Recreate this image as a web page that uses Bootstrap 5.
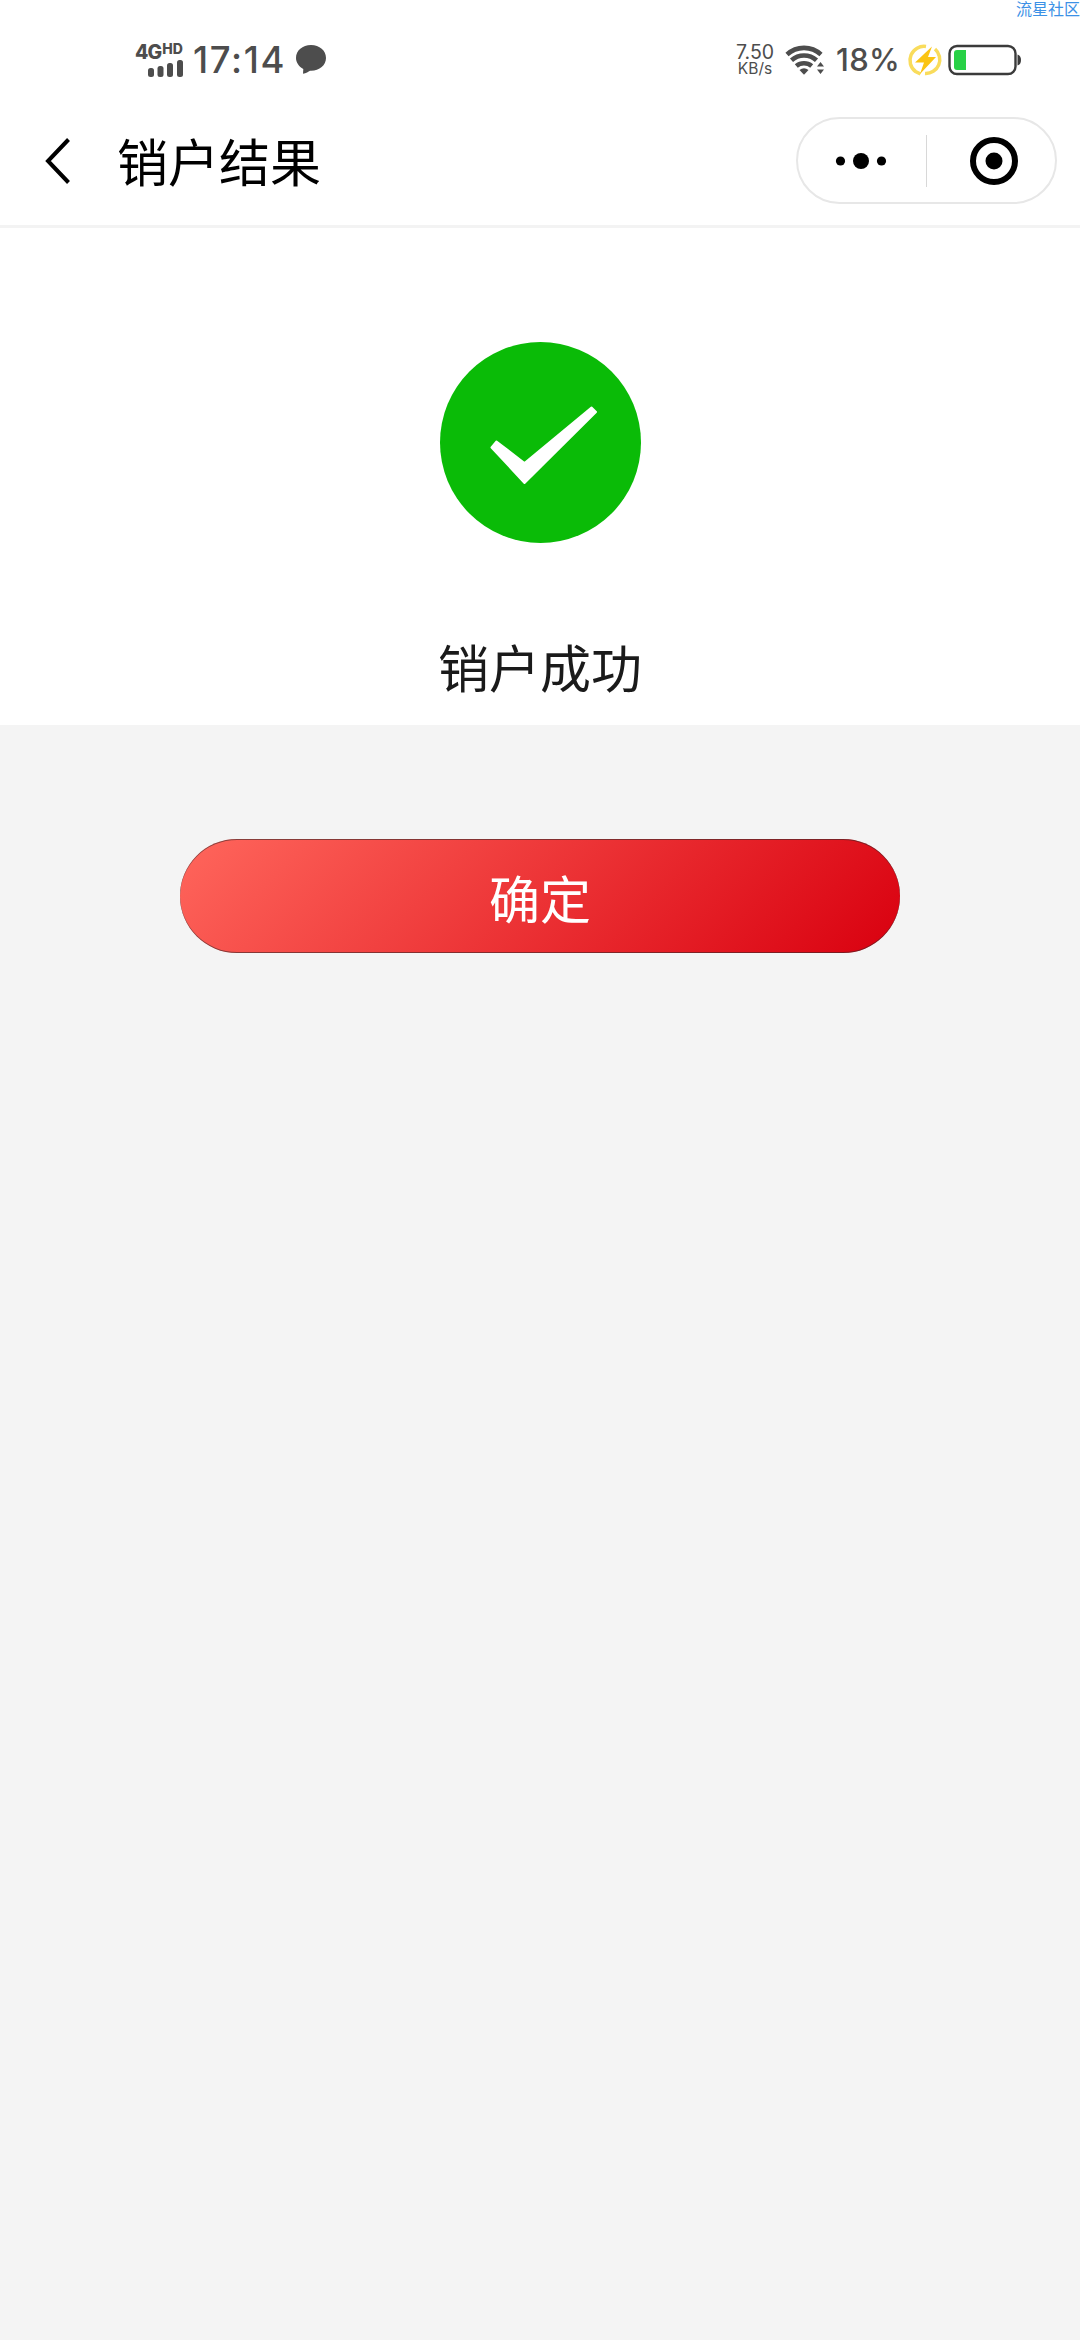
<!DOCTYPE html>
<html lang="zh-CN">
<head>
<meta charset="utf-8">
<meta name="viewport" content="width=device-width, initial-scale=1">
<title>销户结果</title>
<link href="https://cdn.jsdelivr.net/npm/bootstrap@5.3.0/dist/css/bootstrap.min.css" rel="stylesheet">
<style>
  body { font-family: Roboto, "Noto Sans CJK SC", sans-serif; background: #f4f4f4; color: #1a1a1a; min-height: 2340px; overflow: hidden; }
  svg { display: block; flex: none; }
  .status-bar { height: 104px; padding: 16px 59px 0 135px; color: #4d4d4d; }
  .net { width: 49px; height: 34px; }
  .net-label { font: 800 19.5px/19px Inter, sans-serif; letter-spacing: -.9px; height: 17px; }
  .net-label small { font-size: 14px; line-height: 12px; margin-left: 1px; letter-spacing: 0; }
  .clock { font: 500 36.5px/40px Inter, sans-serif; width: 95px; margin-left: 9px; letter-spacing: 1.6px; white-space: nowrap; }
  .speed { font: 400 19.5px/20px Inter, sans-serif; width: 42px; text-align: center; white-space: nowrap; }
  .speed-unit { font-size: 15.5px; line-height: 19px; margin-top: -3px; }
  .percent { font: 500 31px/36px Inter, sans-serif; width: 69px; white-space: nowrap; letter-spacing: .3px; }
  .watermark { top: 0; right: 0; width: 64px; font: 400 16px/16px "Noto Sans CJK SC", sans-serif; color: #3c91e6; white-space: nowrap; }
  .title-bar { height: 124px; padding: 0 23px 8px 44px; border-bottom: 3px solid #f3f3f3; color: #000; }
  .big-text { font: 400 51px/60px "Noto Sans CJK SC", sans-serif; }
  .page-title { margin-left: 46px; margin-top: -1px; }
  .capsule { width: 261px; height: 87px; border: 2px solid #e7e7e7; }
  .capsule-sep { width: 1px; height: 52px; background: #d8d8d8; }
  .result { height: 497px; padding-top: 113px; }
  .result-text { margin-top: 93px; }
  .action { padding-top: 114px; }
  .btn-confirm { width: 720px; height: 114px; border: 0; color: #fff; background: linear-gradient(135deg, #ff665c, #d9000f); box-shadow: inset 0 1px 0 rgba(60,40,40,.6), inset 0 -1px 0 rgba(60,40,40,.6); padding: 2px 0 0; }
  .btn-confirm:hover { color: #fff; }
</style>
</head>
<body>
<div class="bg-white">
  <header class="status-bar d-flex align-items-center position-relative">
    <div class="net">
      <div class="net-label d-flex align-items-start"><span>4G</span><small>HD</small></div>
      <svg width="49" height="17" viewBox="0 0 49 17" fill="#4d4d4d"><rect x="13" y="8" width="6" height="9" rx="2.500"/><rect x="22.500" y="6" width="6" height="11" rx="2.500"/><rect x="32" y="3" width="6" height="14" rx="2.500"/><rect x="42" y="0" width="6" height="17" rx="2.500"/></svg>
    </div>
    <div class="clock">17:14</div>
    <svg class="ms-1" width="40" height="32" viewBox="-1 1 40 32" fill="#4d4d4d"><path d="M18 2C9.500 2 3 7.500 3 15c0 4.500 3 8.700 7.300 11l-.3 4.800c3-.6 5.500-2 7-3.100C26 28.200 33 22.500 33 15S26.500 2 18 2Z"/></svg>
    <div class="d-flex align-items-center ms-auto">
      <div class="speed"><div>7.50</div><div class="speed-unit">KB/s</div></div>
      <svg width="60" height="32" viewBox="2 0 60 32"><g fill="none" stroke="#4d4d4d" stroke-width="4.600"><path d="M13 10.500a25 25 0 0 1 34 0"/><path d="M17.500 16.300a18.500 18.500 0 0 1 25 0"/><path d="M22.300 22a12 12 0 0 1 15.400 0"/></g><path d="M25.500 26q4.500-3.500 9 0L30 30.800Z" fill="#4d4d4d"/><path d="m43 22.500 3.500-4.500 3.500 4.500Zm0 3h7l-3.500 4.500Z" fill="#4d4d4d"/></svg>
      <div class="percent">18%</div>
      <svg width="41" height="34" viewBox="4 0 41 34"><g fill="none" stroke="#f9dc5c" stroke-width="3.500"><path d="M25 3.500A14 14 0 0 0 14.500 28.500l5 2.500"/><path d="M34 6A14 14 0 0 1 24 30.500"/></g><path d="M31 3.500 14 19.500h9L19 31 35 14h-8Z" fill="#fbc412"/></svg>
      <svg width="75" height="34" viewBox="0 0 75 34"><rect x="3.500" y="3" width="66" height="28" rx="7.500" fill="#fff" stroke="#3b3b3b" stroke-width="2.400"/><path d="M71.500 11.500q3.500 1 3.500 5.500t-3.500 5.500Z" fill="#3b3b3b"/><path d="M11 7h9v20h-9q-3 0-3-3V10q0-3 3-3Z" fill="#28d146"/></svg>
    </div>
    <div class="watermark position-absolute">流星社区</div>
  </header>
  <nav class="title-bar d-flex align-items-center">
    <svg width="27" height="48" viewBox="0 0 27 48" fill="none" stroke="#000" stroke-width="4"><path d="M24.500 2.500 4 24l20.500 21.500"/></svg>
    <div class="page-title big-text">销户结果</div>
    <div class="capsule rounded-pill ms-auto d-flex align-items-center">
      <svg width="128" height="50" viewBox="0 0 128 50"><circle cx="42.500" cy="25" r="4.600"/><circle cx="63" cy="25" r="8"/><circle cx="83.500" cy="25" r="4.600"/></svg>
      <div class="capsule-sep"></div>
      <svg width="126" height="50" viewBox="0 0 126 50"><circle cx="67" cy="25" r="21" fill="none" stroke="#000" stroke-width="6"/><circle cx="67" cy="25" r="8.500"/></svg>
    </div>
  </nav>
  <main class="result d-flex flex-column align-items-center">
    <svg width="202" height="202" viewBox="0 0 202 202"><circle cx="101.500" cy="101.500" r="100.500" fill="#0abb07"/><path d="M52.500 106.500 57.500 100.500 85.500 122 152.500 66.500 157 71 85.500 142Z" fill="#fff" stroke="#fff" stroke-width="2" stroke-linejoin="round"/></svg>
    <div class="result-text big-text">销户成功</div>
  </main>
</div>
<div class="action d-flex justify-content-center">
  <button type="button" class="btn btn-confirm rounded-pill big-text">确定</button>
</div>
<script src="https://cdn.jsdelivr.net/npm/bootstrap@5.3.0/dist/js/bootstrap.bundle.min.js"></script>
</body>
</html>
